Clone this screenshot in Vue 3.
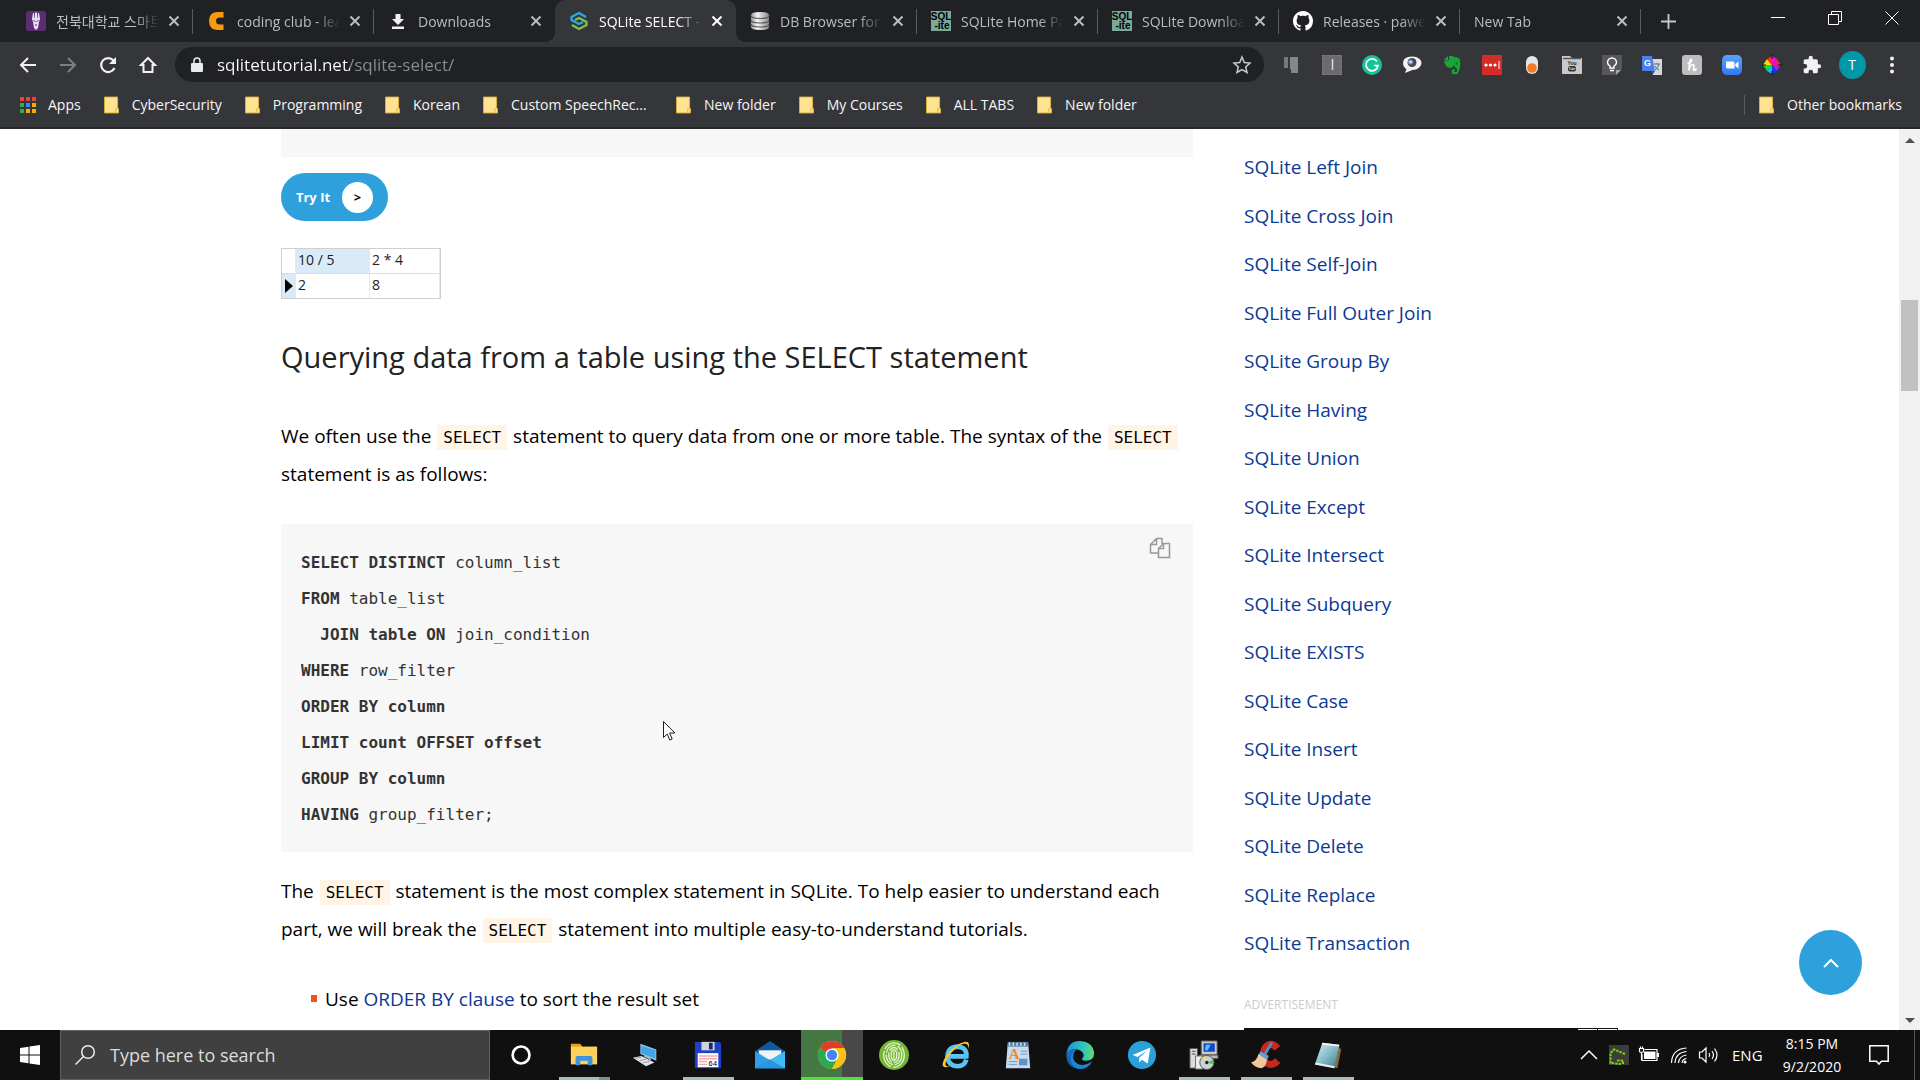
<script setup>
const tabs = [
  { icon: 'f-univ', title: '전북대학교 스마트' },
  { icon: 'f-club', title: 'coding club - learn' },
  { icon: 'f-down', title: 'Downloads' },
  { icon: 'f-tut', title: 'SQLite SELECT - Query', active: true },
  { icon: 'f-db', title: 'DB Browser for SQL' },
  { icon: 'f-sql', title: 'SQLite Home Page' },
  { icon: 'f-sql', title: 'SQLite Download' },
  { icon: 'f-git', title: 'Releases · pawelsa' },
  { icon: '', title: 'New Tab' },
]
const navs = [
  { icon: 'n-back', label: 'Back' },
  { icon: 'n-fwd', label: 'Forward' },
  { icon: 'n-reload', label: 'Reload' },
  { icon: 'n-home', label: 'Home' },
]
const exts = ['bars', 'ibeam', 'gram', 'bubble', 'ever', 'pass', 'pill', 'ytube', 'bulb', 'trans', 'honey', 'zoom', 'wheel', 'puzzle']
const bookmarks = ['CyberSecurity', 'Programming', 'Korean', 'Custom SpeechRec...', 'New folder', 'My Courses', 'ALL TABS', 'New folder']
const links = ['Left Join', 'Cross Join', 'Self-Join', 'Full Outer Join', 'Group By', 'Having', 'Union', 'Except', 'Intersect', 'Subquery', 'EXISTS', 'Case', 'Insert', 'Update', 'Delete', 'Replace', 'Transaction']
const code = [
  ['SELECT DISTINCT', ' column_list'],
  ['FROM', ' table_list'],
  ['  JOIN table ON', ' join_condition'],
  ['WHERE', ' row_filter'],
  ['ORDER BY column', ''],
  ['LIMIT count OFFSET offset', ''],
  ['GROUP BY column', ''],
  ['HAVING', ' group_filter;'],
]
const apps = [
  { icon: 't-cortana', label: 'Cortana' },
  { icon: 't-files', label: 'File Explorer', state: 'open stacked' },
  { icon: 't-remote', label: 'Remote' },
  { icon: 't-floppy', label: 'Total Commander', state: 'open' },
  { icon: 't-mail', label: 'Mail' },
  { icon: 't-chrome', label: 'Chrome', state: 'current' },
  { icon: 't-finger', label: 'Fingerprint' },
  { icon: 't-ie', label: 'Internet Explorer' },
  { icon: 't-word', label: 'WordPad' },
  { icon: 't-edge', label: 'Edge' },
  { icon: 't-tele', label: 'Telegram' },
  { icon: 't-setup', label: 'Setup', state: 'open' },
  { icon: 't-cc', label: 'CCleaner', state: 'open' },
  { icon: 't-note', label: 'Notepad', state: 'open' },
]
</script>

<template>
  <div class="screen">
    <svg class="sprite" aria-hidden="true">
      <defs>
        <linearGradient id="g-db" x1="0" x2="1"><stop offset="0" stop-color="#999" /><stop offset=".35" stop-color="#f4f4f4" /><stop offset="1" stop-color="#888" /></linearGradient>
        <linearGradient id="g-edge" x1="0" y1="0" x2="1" y2="0"><stop offset="0" stop-color="#1b8fd8" /><stop offset=".6" stop-color="#2fc3c0" /><stop offset="1" stop-color="#62de6b" /></linearGradient>
        <linearGradient id="g-edge2" x1="0" y1="0" x2="0" y2="1"><stop offset="0" stop-color="#1572c4" /><stop offset="1" stop-color="#0c59a4" /></linearGradient>
        <linearGradient id="g-note" x1="0" y1="0" x2="1" y2="1"><stop offset="0" stop-color="#d8f0f2" /><stop offset=".5" stop-color="#86bccb" /><stop offset="1" stop-color="#3e7685" /></linearGradient>
        <linearGradient id="g-zoom" x1="0" y1="0" x2="0" y2="1"><stop offset="0" stop-color="#5aa1ff" /><stop offset="1" stop-color="#2f7af5" /></linearGradient>

        <symbol id="f-univ" viewBox="0 0 20 20"><rect width="20" height="20" rx="2" fill="#5b2e74" /><path d="M7 2h1l.5 5h.5V1.500h2V7h.500L12 2h1l1 6-1 3-1 6-2 2-2-2-1-6-1-3z" fill="#eadff0" /><path d="M7.500 9l2 2M12.500 9l-2 2M9 14h2" stroke="#5b2e74" /></symbol>
        <symbol id="f-club" viewBox="0 0 20 20"><path d="M16.500 1v5.500H13q-4 0-4 3.500t4 3.500h3.500V19H11q-9 0-9-9t9-9z" fill="#f79a0e" /></symbol>
        <symbol id="f-down" viewBox="0 0 20 20"><path d="M7.500 3h5v5H16l-6 6-6-6h3.500zM4 15.500h12V18H4z" fill="#f1f1f1" /></symbol>
        <symbol id="f-tut" viewBox="0 0 20 20"><g fill="none" stroke-width="2.300"><path d="M17 6L10 2 2.500 6v3L10 13l4-2" stroke="#27a9e1" /><path d="M3 14l7 4 7.500-4v-3L10 7 6 9" stroke="#80c342" /></g></symbol>
        <symbol id="f-db" viewBox="0 0 20 20"><path d="M1 4q0-3 9-3t9 3v12q0 3-9 3t-9-3z" fill="url(#g-db)" /><path d="M1 4.500q0 3 9 3t9-3M1 9q0 3 9 3t9-3M1 13q0 3 9 3t9-3" fill="none" stroke="#555" stroke-width="1.200" /></symbol>
        <symbol id="f-sql" viewBox="0 0 20 20"><rect width="20" height="20" fill="#7aa99a" /><text x="10" y="9" font-size="10" font-weight="bold" font-family="Liberation Sans, sans-serif" text-anchor="middle">SQL</text><text x="11" y="18" font-size="10" font-weight="bold" font-family="Liberation Sans, sans-serif" text-anchor="middle">-ite</text></symbol>
        <symbol id="f-git" viewBox="0 0 16 16"><path fill="#fff" d="M8 0C3.580 0 0 3.580 0 8c0 3.540 2.290 6.530 5.470 7.590.4.070.550-.17.550-.38 0-.19-.01-.82-.01-1.490-2.010.37-2.530-.49-2.690-.94-.09-.23-.48-.94-.82-1.130-.28-.15-.68-.52-.01-.53.630-.01 1.080.580 1.230.820.720 1.210 1.870.870 2.330.660.070-.52.280-.87.510-1.070-1.780-.2-3.640-.89-3.640-3.950 0-.87.310-1.590.820-2.150-.08-.2-.36-1.020.080-2.120 0 0 .670-.21 2.200.820.640-.18 1.320-.27 2-.27s1.360.090 2 .270c1.530-1.040 2.200-.82 2.200-.82.440 1.100.160 1.920.080 2.120.510.560.820 1.270.820 2.150 0 3.070-1.870 3.750-3.650 3.950.290.250.540.730.540 1.480 0 1.070-.01 1.930-.01 2.200 0 .21.150.460.550.380A8 8 0 0016 8c0-4.420-3.580-8-8-8z" /></symbol>

        <symbol id="n-back" viewBox="0 0 20 20"><path d="M18 10H3M10 3l-7 7 7 7" fill="none" stroke="#f1f1f1" stroke-width="2" /></symbol>
        <symbol id="n-fwd" viewBox="0 0 20 20"><path d="M2 10h15M10 3l7 7-7 7" fill="none" stroke="#7d7e81" stroke-width="2" /></symbol>
        <symbol id="n-reload" viewBox="0 0 20 20"><path d="M16.500 13a7 7 0 1 1-1-7.500" fill="none" stroke="#f1f1f1" stroke-width="2.200" /><path d="M18 2v7h-7z" fill="#f1f1f1" /></symbol>
        <symbol id="n-home" viewBox="0 0 20 20"><path d="M10 3l7 7h-2.500v7h-9v-7H3z" fill="none" stroke="#f1f1f1" stroke-width="2" /></symbol>

        <symbol id="bars" viewBox="0 0 20 20"><path d="M2 2h4v11H2z" fill="#77787b" /><path d="M8 2h8v16H9v-4H8z" fill="#85868a" /></symbol>
        <symbol id="ibeam" viewBox="0 0 20 20"><path d="M0 0h20v20H0z" fill="#6c6c6c" /><path d="M0 0h20v20H0z" fill="none" stroke="#8a8a8a" stroke-dasharray="3 2" /><path d="M10.500 4v11" stroke="#ddd6ee" stroke-width="1.500" /></symbol>
        <symbol id="gram" viewBox="0 0 20 20"><circle cx="10" cy="10" r="10" fill="#15c39a" /><path d="M15 6.500A6 6 0 1 0 16 10.500H12" fill="none" stroke="#fff" stroke-width="1.700" /><path d="M13.500 10l2.500 0v4z" fill="#fff" /></symbol>
        <symbol id="bubble" viewBox="0 0 20 20"><path d="M10 1.500c6 0 9.500 3 9.500 6.500s-4 7-9 7l-7.500 3 1.500-4Q1 12 1 8q0-6.500 9-6.500z" fill="#f2f2f2" /><circle cx="10" cy="7.500" r="4.500" fill="#4d4652" /><circle cx="8.500" cy="7" r="2.500" fill="#7796d0" /><circle cx="8.500" cy="7" r="1" fill="#fff" /></symbol>
        <symbol id="ever" viewBox="0 0 20 20"><path d="M6 1v4H2q0-1 4-4zM7 1q3-1 5 1 5 0 6 3 1 8-2 13-1 2-5 1-2-1-1-4 1-1 3-1v2q-1 0-1 1h3v-3q-3-2-3-4-1 3-3 3-3 0-5-2-2-3-2-5l5-1z" fill="#16a637" /><circle cx="14.500" cy="8.500" r=".9" fill="#0a5c1d" /></symbol>
        <symbol id="pass" viewBox="0 0 20 20"><rect width="20" height="20" rx="1" fill="#d32d27" /><g fill="#fff"><circle cx="4" cy="10" r="1.600" /><circle cx="8.500" cy="10" r="1.600" /><circle cx="13" cy="10" r="1.600" /><path d="M16.500 6h1v8h-1z" /></g></symbol>
        <symbol id="pill" viewBox="0 0 20 20"><rect x="4" y="1" width="12" height="18" rx="6" fill="#e4e6e8" /><circle cx="10" cy="13" r="4.800" fill="#f47b2a" /></symbol>
        <symbol id="ytube" viewBox="0 0 20 20"><path d="M0 1h8l2 2h10v16H0z" fill="#c9c9c9" /><path d="M1 3.500h18" stroke="#55565a" stroke-width="1.500" /><rect x="6" y="11" width="8" height="5.500" rx="2" fill="#333" /><text x="10" y="10" font-size="5" font-weight="bold" font-family="Liberation Sans, sans-serif" text-anchor="middle" fill="#222">You</text><text x="10" y="15" font-size="3" font-weight="bold" font-family="Liberation Sans, sans-serif" text-anchor="middle" fill="#ddd">Tube</text></symbol>
        <symbol id="bulb" viewBox="0 0 20 20"><path d="M0 0h20v14l-6 6H0z" fill="#57585a" /><path d="M14 20v-5h5z" fill="#a6a6a6" /><path d="M8 13v-2Q5.500 9.500 5.500 7.500a4.500 4.500 0 0 1 9 0Q14.500 9.500 12 11v2zM8 15.500h4" fill="none" stroke="#fff" stroke-width="1.400" /></symbol>
        <symbol id="trans" viewBox="0 0 20 20"><path d="M9 4h11v16h-9z" fill="#d5d8dc" /><path d="M12 9h6M15 8v1m2 0q-1 4-4 6m0-4q1 3 4 4" stroke="#5d6b7b" fill="none" /><path d="M0 1h10l3 15H1q-1 0-1-1z" fill="#4a80ec" /><path d="M9 16h4l-2 3z" fill="#2d53b8" /><text x="5.500" y="11" font-size="9" font-weight="bold" font-family="Liberation Sans, sans-serif" text-anchor="middle" fill="#fff">G</text></symbol>
        <symbol id="honey" viewBox="0 0 20 20"><rect width="20" height="20" rx="3" fill="#bdbdbd" /><path d="M5.500 8.500q4.500-1 4-4-2-1.500-2.500 11 1-6 4-6 1.500 0 .5 5.500 1.500 1 3-1.500" fill="none" stroke="#fff" stroke-width="1.700" /></symbol>
        <symbol id="zoom" viewBox="0 0 20 20"><rect width="20" height="20" rx="5" fill="url(#g-zoom)" /><path d="M4 6.500h7q1.500 0 1.500 1.500v5.500h-7Q4 13.500 4 12zM13.300 9L16.500 6.500v7L13.300 11z" fill="#fff" /></symbol>
        <symbol id="wheel" viewBox="0 0 20 20"><g><path d="M10 10V1l5 3z" fill="#f0e" /><path d="M10 10l5-6 4 6z" fill="#f02060" /><path d="M10 10h9l-4 6z" fill="#a020f0" /><path d="M10 10l5 6-5 3z" fill="#2030ff" /><path d="M10 10v9l-5-3z" fill="#00c8f0" /><path d="M10 10l-5 6-4-6z" fill="#10e040" /><path d="M10 10H1l4-6z" fill="#f0e000" /><path d="M10 10L5 4l5-3z" fill="#ff3010" /></g><path d="M10 0v4M10 16v4M0 10h4M16 10h4" stroke="#111" /></symbol>
        <symbol id="puzzle" viewBox="0 0 24 24"><path fill="#f1f1f1" d="M20.500 11H19V7a2 2 0 0 0-2-2h-4V3.500a2.500 2.500 0 0 0-5 0V5H4a2 2 0 0 0-2 2v3.800h1.500a2.700 2.700 0 0 1 0 5.400H2V20a2 2 0 0 0 2 2h3.800v-1.500a2.700 2.700 0 0 1 5.400 0V22H17a2 2 0 0 0 2-2v-4h1.500a2.500 2.500 0 0 0 0-5z" /></symbol>
        <symbol id="folder" viewBox="0 0 16 18"><path d="M.5.5h14V12l1 1v4.500H.500z" fill="#ffe391" stroke="#d8b13c" /><path d="M12.500 17v-4h2" fill="none" stroke="#e0b43a" /></symbol>

        <symbol id="t-cortana" viewBox="0 0 32 32"><circle cx="15" cy="16" r="9" fill="none" stroke="#fff" stroke-width="2.800" /></symbol>
        <symbol id="t-files" viewBox="0 0 32 32"><path d="M2 4h10l2 3v4H2z" fill="#e3a21a" /><path d="M2 7h28v19H2z" fill="#ffd05a" /><path d="M7 27v-8q0-2 2-2h14q2 0 2 2v8h-5v-5h-8v5z" fill="#3d94dc" /></symbol>
        <symbol id="t-remote" viewBox="0 0 32 32"><path d="M10 4l17 6v12L10 15z" fill="#8fc7ee" /><path d="M11 6l15 5v9l-15-6z" fill="#3fa3e6" /><path d="M2 19l9-2 14 7-9 4z" fill="#dfe5ea" /><path d="M5 19.500l6-1M9 22l7-1.500M13 24l7-1" stroke="#909aa3" /><path d="M14 17l6 2.500v3" stroke="#aab4bc" fill="none" stroke-width="2" /></symbol>
        <symbol id="t-floppy" viewBox="0 0 32 32"><path d="M2 2h26l2 2v26H2z" fill="#1f3fc4" /><path d="M9 2h14v9H9z" fill="#cfd3da" /><path d="M17 3h4v7h-4z" fill="#1b2a66" /><path d="M5 14h22v15H5z" fill="#fff" /><path d="M6 17h20M6 20h20M6 23h9M6 26h9" stroke="#f2a9ae" stroke-width="1.500" /><text x="21" y="28" font-size="8" font-family="Liberation Mono, monospace" text-anchor="middle">64</text></symbol>
        <symbol id="t-mail" viewBox="0 0 32 32"><path d="M0 12L16 1l16 11v18H0z" fill="#0f5a9e" /><path d="M4 11h24v10H4z" fill="#f0f3f6" /><path d="M0 12l16 9.500L32 12v18H0z" fill="#2f9fe6" /><path d="M16 21.500L32 12v18z" fill="#3dbdf3" /><path d="M0 30l16-9 16 9z" fill="#2c96dd" /></symbol>
        <symbol id="t-chrome" viewBox="0 0 32 32"><circle cx="16" cy="16" r="15" fill="#fbc116" /><path d="M16 16L3 8.500A15 15 0 0 1 29 8.500z" fill="#e33b2e" /><path d="M16 16L3 8.500A15 15 0 0 0 16 31l6-11.500z" fill="#2da94f" /><path d="M16 8.500h13A15 15 0 0 1 16 31l6-11.500z" fill="#fbc116" /><circle cx="16" cy="16" r="7" fill="#fff" /><circle cx="16" cy="16" r="5.500" fill="#4285f4" /></symbol>
        <symbol id="t-finger" viewBox="0 0 32 32"><circle cx="16" cy="16" r="16" fill="#74b62f" /><g fill="none" stroke="#e4f2d4" stroke-width="1.400"><ellipse cx="16" cy="16" rx="11" ry="13" stroke-dasharray="20 2" /><ellipse cx="16" cy="16" rx="8.300" ry="10.500" stroke-dasharray="14 2" /><ellipse cx="16" cy="16" rx="5.600" ry="8" stroke-dasharray="11 2" /><ellipse cx="16" cy="16" rx="3" ry="5.500" /><path d="M16 12v10" /></g></symbol>
        <symbol id="t-ie" viewBox="0 0 32 32"><path d="M9 17.500h18q1-10-10-10.500Q7 8 7 18q1 10 11 10 7 0 9-7" fill="none" stroke="#5cc3f2" stroke-width="5" /><path d="M29 10q3-9-4-8Q15 4 6 16-2 29 5 29q3 0 5-2-4 2-5 0-1-4 5-12 7-9 14-11 6-1 5 6z" fill="#fbc62c" /></symbol>
        <symbol id="t-word" viewBox="0 0 32 32"><path d="M5 4h22l2 26H3z" fill="#c6dcf1" /><path d="M5 2h22v5H5z" fill="#5b7b9c" /><path d="M7 3v3M11 3v3M15 3v3M19 3v3M23 3v3" stroke="#dde8f2" stroke-width="1.500" /><text x="12" y="20" font-size="16" font-family="Liberation Serif, serif" text-anchor="middle" fill="#f08a2a" font-weight="bold">A</text><path d="M19 12h7M19 15h7M6 23h9M6 26h9" stroke="#7793b0" /><path d="M17 20h9v7h-9z" fill="#5f93c7" /></symbol>
        <symbol id="t-edge" viewBox="0 0 32 32"><path d="M1.500 15Q3 1 16 1q14 1 15 13 0 8-9 8-4 0-4-2 2-1 2-4-1-5-7-6-8-1-11.500 5z" fill="url(#g-edge)" /><path d="M1.500 15Q5 9 12 10q-4 3-3 10 2 8 11 8 5 0 9-4-5 7-13 7Q1 30 1.500 15z" fill="url(#g-edge2)" /><path d="M12 10q-8 9 1 15 7 4 16-2-5 8-13 8-9-1-10-10 0-8 6-11z" fill="#1b86d6" /></symbol>
        <symbol id="t-tele" viewBox="0 0 32 32"><circle cx="16" cy="16" r="15" fill="#2ba0d9" /><path d="M6 16l19-8-3 17-6-4-3 3v-5l9-8-11 7z" fill="#fff" /></symbol>
        <symbol id="t-setup" viewBox="0 0 32 32"><path d="M13 1h17v15H13z" fill="#c9c9c9" stroke="#555" /><path d="M15.500 3.500h12v9h-12z" fill="#1746d1" /><path d="M18 5h5l-3 6h-3z" fill="#3fd0ef" /><path d="M11 16h20v4H11z" fill="#b8b8b8" stroke="#444" /><path d="M1 9h8v21H1z" fill="#dcdcdc" stroke="#555" /><path d="M3 12h4M3 15h4" stroke="#444" /><path d="M7 17h8v14H7z" fill="#eee" stroke="#666" /><circle cx="19" cy="24" r="7.500" fill="#c9d0d8" stroke="#555" /><path d="M19 24l7-3v5z" fill="#55c84d" /><path d="M19 24l-5-5 3-2z" fill="#f4e34b" /><circle cx="19" cy="24" r="1.800" fill="#222" /></symbol>
        <symbol id="t-cc" viewBox="0 0 32 32"><path d="M28 9Q24 3.500 19 5q-5 2-5.500 9-.5 11 6 12 5 .5 9-4" fill="none" stroke="#c9271e" stroke-width="7.500" /><path d="M21 2l2.500 1.500-7 12-3-1.500z" fill="#4d8ec7" /><path d="M10 12l9 5-2 4-9-5z" fill="#5ba1d8" /><path d="M8 15l9 6q-1 8-6 9-6 0-11-6 6-1 8-9z" fill="#f0c79a" /></symbol>
        <symbol id="t-note" viewBox="0 0 32 32"><path d="M27 7l3 3-4 20-3-1z" fill="#8a6b3c" /><path d="M10 3l18 2-5 25L2 26z" fill="url(#g-note)" /><path d="M10 3l18 2v2L9.500 5z" fill="#eef4f4" /><path d="M2 26l21 4v-2L3 24z" fill="#e8ecec" /></symbol>
      </defs>
    </svg>

    <header class="browser">
      <div class="tabs">
        <div v-for="(t, i) in tabs" :key="i" class="tab" :class="{ active: t.active, before: i === 2 }">
          <svg v-if="t.icon" class="fav"><use :href="'#' + t.icon" /></svg>
          <span class="title">{{ t.title }}</span>
          <button class="close" aria-label="Close tab"><svg viewBox="0 0 10 10"><path d="M.5.5l9 9m0-9l-9 9" /></svg></button>
        </div>
        <button class="plus" aria-label="New tab"><svg viewBox="0 0 16 16"><path d="M8 0v16M0 8h16" /></svg></button>
        <div class="wins">
          <button aria-label="Minimize"><svg viewBox="0 0 14 14"><path d="M0 6.500h14" /></svg></button>
          <button aria-label="Restore"><svg viewBox="0 0 14 14"><path d="M.5 3.500h10v10H.500zM3.500 3V.5h10v10H11" /></svg></button>
          <button aria-label="Close"><svg viewBox="0 0 14 14"><path d="M.5.5l13 13m0-13l-13 13" /></svg></button>
        </div>
      </div>
      <div class="toolbar">
        <button v-for="n in navs" :key="n.icon" class="slot" :aria-label="n.label"><svg><use :href="'#' + n.icon" /></svg></button>
        <div class="omni">
          <svg class="lock" viewBox="0 0 12 16"><path d="M1 6h10q1 0 1 1v7q0 1-1 1H1q-1 0-1-1V7q0-1 1-1z" fill="#e8eaed" /><path d="M3 6V4a3 3 0 0 1 6 0v2" fill="none" stroke="#e8eaed" stroke-width="1.500" /></svg>
          <input aria-label="Address" value="sqlitetutorial.net/sqlite-select/" />
          <svg class="star" viewBox="0 0 20 20"><path d="M10 2l2.300 5.500 5.700.5-4.300 3.900L15 17.500l-5-3-5 3 1.300-5.600L2 8l5.700-.5z" /></svg>
        </div>
        <button v-for="e in exts" :key="e" class="slot" :aria-label="e"><svg><use :href="'#' + e" /></svg></button>
        <button class="slot"><span class="avatar">T</span></button>
        <button class="slot" aria-label="Menu"><svg viewBox="0 0 20 20" fill="#f1f1f1"><circle cx="10" cy="3.500" r="2" /><circle cx="10" cy="10" r="2" /><circle cx="10" cy="16.500" r="2" /></svg></button>
      </div>
      <nav class="marks">
        <a href="#" class="apps">
          <svg viewBox="0 0 16 16"><g fill="#ea4335"><path d="M0 0h4v4H0zM6 0h4v4H6zM12 0h4v4h-4z" /></g><path d="M0 6h4v4H0zM0 12h4v4H0z" fill="#34a853" /><path d="M6 6h4v4H6z" fill="#2f8df5" /><path d="M12 6h4v4h-4zM6 12h4v4H6zM12 12h4v4h-4z" fill="#f9ab00" /></svg>Apps
        </a>
        <a v-for="(b, i) in bookmarks" :key="i" href="#" :class="{ long: b.endsWith('...') }"><svg><use href="#folder" /></svg>{{ b }}</a>
        <a href="#" class="other"><svg><use href="#folder" /></svg>Other bookmarks</a>
      </nav>
    </header>

    <div class="view">
      <div class="scroller">
        <div class="wrap">
          <main>
            <div class="strip"></div>
            <button class="try">Try It <span>&gt;</span></button>
            <table class="result">
              <thead><tr><th class="mark"></th><th class="sel">10 / 5</th><th class="last">2 * 4</th></tr></thead>
              <tbody><tr><td class="mark sel"><i></i></td><td>2</td><td>8</td></tr></tbody>
            </table>
            <h2>Querying data from a table using the SELECT statement</h2>
            <p>We often use the <code>SELECT</code> statement to query data from one or more table. The syntax of the <code>SELECT</code> statement is as follows:</p>
            <div class="block">
              <pre><template v-for="(l, i) in code" :key="i"><b>{{ l[0] }}</b>{{ l[1] + '\n' }}</template></pre>
              <button class="copy" aria-label="Copy"><svg viewBox="0 0 22 22"><path d="M7.500 1.500H13V7M7.500 1.500L1.500 7.500V16H9M7.500 1.500v6h-6M14.500 6.500h6v14H9.500v-9zm0 0v5h-5" /></svg></button>
            </div>
            <p>The <code>SELECT</code> statement is the most complex statement in SQLite. To help easier to understand each part, we will break the <code>SELECT</code> statement into multiple easy-to-understand tutorials.</p>
            <ul class="uses"><li>Use <a href="#">ORDER BY clause</a> to sort the result set</li></ul>
          </main>
          <aside>
            <ul><li v-for="l in links" :key="l"><a href="#">SQLite {{ l }}</a></li></ul>
            <small>ADVERTISEMENT</small>
            <div class="ad"><i></i><i></i></div>
          </aside>
        </div>
      </div>
      <div class="bar"><i class="up"></i><span class="thumb"></span><i class="down"></i></div>
      <button class="top" aria-label="Back to top"><svg viewBox="0 0 16 10"><path d="M1 9l7-7 7 7" /></svg></button>
      <svg class="cursor" viewBox="0 0 13 20"><path d="M.5.5v16l3.700-3.500 2.600 6 2.400-1-2.600-6h5.300z" fill="#fff" stroke="#1b1b2b" /></svg>
    </div>

    <footer class="task">
      <button class="start" aria-label="Start"><svg viewBox="0 0 20 20"><path d="M0 3l8.500-1.300v7.800H0zM9.500 1.500L20 0v9.500H9.500zM0 10.500h8.500v7.800L0 17zM9.500 10.500H20V20L9.500 18.500z" fill="#fff" /></svg></button>
      <label class="find">
        <svg viewBox="0 0 20 20"><circle cx="13" cy="7" r="6.300" /><path d="M8.500 11.500L.5 19.500" /></svg>
        <input placeholder="Type here to search" aria-label="Search" />
      </label>
      <button v-for="a in apps" :key="a.icon" class="app" :class="a.state" :aria-label="a.label"><svg><use :href="'#' + a.icon" /></svg></button>
      <div class="tray">
        <svg viewBox="0 0 20 20"><path d="M2 14l8-8 8 8" stroke-width="1.500" /></svg>
        <svg viewBox="0 0 20 20"><path d="M0 0h20v20H0z" fill="#3c3c3c" stroke="none" /><path d="M16 9L5 4.500 1.500 8v10L12 19M8 15.500h6V19" stroke="#78d800" stroke-width="2" stroke-dasharray="2.500 1" /></svg>
        <svg viewBox="0 0 20 20"><path d="M5.500 4.500H18v11H3V9" /><path d="M5 6.500h11.500V14H5zM18 8h2v4h-2z" fill="#fff" stroke="none" /><path d="M.5 3.500h4V6q0 1.500-2 1.500T.500 6zM1.500 1.500v2M3.500 1.500v2M2.500 8v7" /></svg>
        <svg viewBox="0 0 20 20"><path d="M2.500 18Q3 4 17.500 3M6 18Q6.500 7.500 17.500 6.500M9.500 18Q10 11 17.500 10M13 18q.5-4 4.500-4.500" /><circle cx="16" cy="17" r="1.500" fill="#fff" stroke="none" /></svg>
        <svg viewBox="0 0 20 20"><path d="M.5 7v6H3l4 4V3L3 7zM10 8q1.500 2 0 4M13 6q3 4 0 8M15.500 3.500q5 6.500 0 13" /></svg>
        <span class="lang">ENG</span>
        <span class="clock">8:15 PM<br />9/2/2020</span>
        <svg class="bell" viewBox="0 0 20 20"><path d="M.8.8h18.400v15.400H12.500L10 19l-2.500-2.800H.800z" stroke-width="1.500" /></svg>
      </div>
    </footer>
  </div>
</template>

<style>
body { margin: 0; background: #fff; overflow: hidden; }
</style>

<style scoped>
* { box-sizing: border-box; }
.screen { height: 100vh; display: flex; flex-direction: column; font-family: "Open Sans", "Noto Sans CJK KR", sans-serif; color: #000; overflow: hidden; }
.sprite { position: absolute; width: 0; height: 0; }
svg { display: block; flex: none; overflow: visible; }
button { border: 0; padding: 0; background: none; font: inherit; color: inherit; display: flex; align-items: center; justify-content: center; flex: none; }
a { text-decoration: none; color: #0b3994; }
ul { list-style: none; margin: 0; padding: 0; }

.browser { flex: none; background: #35363a; color: #f1f1f1; font-size: 14px; border-bottom: 2px solid #27282b; }
.tabs { display: flex; height: 42px; background: #202124; padding-left: 12px; }
.tab { position: relative; width: 181px; display: flex; align-items: center; padding: 0 14px; color: #b9bcc0; }
.tab::after { content: ""; position: absolute; right: 0; top: 9px; width: 1px; height: 25px; background: #5a5c60; }
.tab.active { background: #35363a; color: #fff; border-radius: 10px 10px 0 0; }
.tab.before::after { background: none; }
.tab.active::after { right: -10px; top: auto; bottom: 0; width: 10px; height: 10px; background: radial-gradient(circle at 100% 0, transparent 10px, #35363a 10px); }
.tab.active::before { content: ""; position: absolute; left: -10px; bottom: 0; width: 10px; height: 10px; background: radial-gradient(circle at 0 0, transparent 10px, #35363a 10px); }
.fav { width: 20px; height: 20px; margin-right: 10px; }
.title { flex: 1; min-width: 0; overflow: hidden; white-space: nowrap; -webkit-mask-image: linear-gradient(90deg, #000 76%, transparent); mask-image: linear-gradient(90deg, #000 76%, transparent); }
.close { width: 10px; height: 10px; margin-left: 10px; }
.close svg { width: 10px; height: 10px; }
.close path, .plus path { stroke: currentColor; stroke-width: 2; fill: none; }
.plus { width: 54px; color: #c4c6c9; }
.plus svg { width: 15px; height: 15px; }
.wins { margin-left: auto; display: flex; height: 36px; }
.wins button { width: 57px; }
.wins svg { width: 14px; height: 14px; }
.wins path { fill: none; stroke: #fff; }

.toolbar { display: flex; align-items: center; height: 45px; padding: 0 8px; }
.slot { width: 40px; height: 40px; }
.slot svg { width: 20px; height: 20px; }
.omni { flex: 1; display: flex; align-items: center; height: 35px; margin: 0 8px 0 7px; padding: 0 12px 0 16px; border-radius: 18px; background: #202124; }
.lock { width: 12px; height: 16px; margin-right: 14px; }
.omni input { flex: 1; min-width: 0; border: 0; outline: 0; padding: 0; font: 17px "Open Sans", sans-serif; color: transparent; background: linear-gradient(90deg, #fff 133px, #8b8d91 133px); -webkit-background-clip: text; background-clip: text; }
.star { width: 20px; height: 20px; }
.star path { fill: none; stroke: #c8cacd; stroke-width: 1.500; }
.avatar { width: 27px; height: 28px; border-radius: 50%; background: #0097a7; display: grid; place-items: center; color: #fff; font-size: 14px; }
.marks { display: flex; align-items: center; height: 40px; padding: 0 18px 4px 20px; }
.marks a { display: flex; align-items: center; color: #f5f5f5; margin-right: 23px; line-height: 36px; white-space: nowrap; }
.marks svg { width: 15px; height: 18px; margin-right: 13px; }
.marks .long { width: 170px; }
.marks .apps svg { width: 16px; height: 16px; margin-right: 12px; }
.marks .other { margin: 0 0 0 auto; padding-left: 14px; border-left: 1px solid #5a5c60; line-height: 20px; }

.view { flex: 1; min-height: 0; position: relative; display: flex; }
.scroller { flex: 1; overflow: hidden; }
.wrap { max-width: 1337px; margin: 0 auto; display: flex; gap: 51px; font-size: 19px; }
main { flex: 912; min-width: 0; }
aside { flex: 374; min-width: 0; }
.strip { height: 28px; background: #f7f7f7; }
.try { margin-top: 16px; width: 107px; height: 48px; border-radius: 24px; background: #2ea1dd; color: #fff; font-size: 13px; font-weight: 700; gap: 12px; }
.try span { width: 31px; height: 31px; border-radius: 50%; background: #fff; color: #000; display: grid; place-items: center; }
.result { margin-top: 27px; width: 160px; border: 1px solid #cfcfcf; border-collapse: separate; border-spacing: 0; table-layout: fixed; font-size: 14px; line-height: 22px; color: #222; }
.result th, .result td { padding: 0 0 2px 2px; height: 24px; text-align: left; font-weight: 400; border-right: 1px solid #e8e8e8; }
.result th { border-bottom: 1px solid #dcdcdc; width: 74px; }
.result .last { width: 70px; }
.result .mark { width: 14px; padding: 0; }
.result .sel { background: #d9eaf8; }
.result i { display: block; margin-left: 3px; width: 0; height: 0; border: 7px solid transparent; border-left: 8px solid #000; border-right: 0; }
h2 { margin: 34px 0 0; font-size: 29px; font-weight: 400; line-height: 48px; color: #222; white-space: nowrap; }
p { margin: 36px 0 0; line-height: 38px; }
code { font: 16px "DejaVu Sans Mono", monospace; background: #fff4e6; padding: 3px 6px; margin: 0 1px; }
.block { position: relative; margin-top: 31px; padding: 21px 20px 19px; background: #f7f7f7; }
pre { margin: 0; font: 16px/36px "DejaVu Sans Mono", monospace; color: #333; }
.copy { position: absolute; top: 13px; right: 22px; }
.copy svg { width: 22px; height: 22px; }
.copy path { fill: none; stroke: #999; stroke-width: 1.500; }
.block + p { margin-top: 20px; }
.uses { margin-top: 32px; line-height: 38px; }
.uses li { padding-left: 44px; display: block; }
.uses li::before { content: ""; float: left; width: 6px; height: 7px; margin: 15px 0 0 -14px; background: #f4511e; }
aside ul { margin-top: 22px; height: 808px; display: flex; flex-direction: column; justify-content: space-between; line-height: 32px; }
small { display: block; margin-top: 34px; font-size: 12px; line-height: 24px; color: #ccc; }
.ad { margin-top: 11px; height: 20px; background: #111; padding: 1px 1px 0; display: flex; justify-content: flex-end; gap: 1px; }
.ad i { width: 19px; background: #fff; }

.bar { width: 21px; background: #f1f1f1; display: flex; flex-direction: column; align-items: center; padding: 9px 0 7px; }
.bar i { border: 5px solid transparent; border-top: 0; border-bottom: 5px solid #505050; }
.bar .down { margin-top: auto; border-bottom: 0; border-top: 5px solid #505050; }
.thumb { width: 17px; height: 91px; margin-top: 157px; background: #c1c1c1; }
.top { position: absolute; right: 58px; bottom: 35px; width: 63px; height: 65px; border-radius: 50%; background: #2ea1dd; }
.top svg { width: 16px; height: 10px; }
.top path { fill: none; stroke: #fff; stroke-width: 2; }
.cursor { position: absolute; left: 663px; top: 592px; width: 13px; height: 20px; }

.task { flex: none; height: 50px; background: #101010; display: flex; color: #fff; }
.start { width: 60px; }
.start svg { width: 20px; height: 20px; }
.find { width: 430px; margin-right: 1px; display: flex; align-items: center; padding-left: 14px; gap: 15px; background: #404040; border: 1px solid #606060; }
.find svg { width: 20px; height: 20px; fill: none; stroke: #eee; stroke-width: 1.500; }
.find input { flex: 1; min-width: 0; border: 0; outline: 0; padding: 0; background: none; font: 18px "Open Sans", sans-serif; }
.find input::placeholder { color: #dcdcdc; opacity: 1; }
.app { position: relative; width: 62px; }
.app svg { width: 30px; height: 30px; }
.open::after { content: ""; position: absolute; left: 6px; right: 5px; bottom: 0; height: 3px; background: #a9bdb0; }
.stacked::after { background: linear-gradient(90deg, #a9bdb0 40px, #7f9186 40px); }
.current { background: linear-gradient(90deg, #467844 41px, #484848 41px); border-bottom: 3px solid #4fe338; padding-top: 3px; }
.tray { margin-left: auto; display: flex; align-items: center; gap: 10px; padding-right: 31px; position: relative; }
.tray svg { width: 20px; height: 20px; fill: none; stroke: #fff; stroke-width: 1.200; }
.tray::after { content: ""; position: absolute; right: 5px; top: 0; bottom: 0; width: 1px; background: #555; }
.lang { font-size: 15px; margin-left: 3px; width: 30px; }
.clock { width: 80px; text-align: center; font-size: 14px; line-height: 23px; }
.tray .bell { margin-left: 7px; }
</style>
